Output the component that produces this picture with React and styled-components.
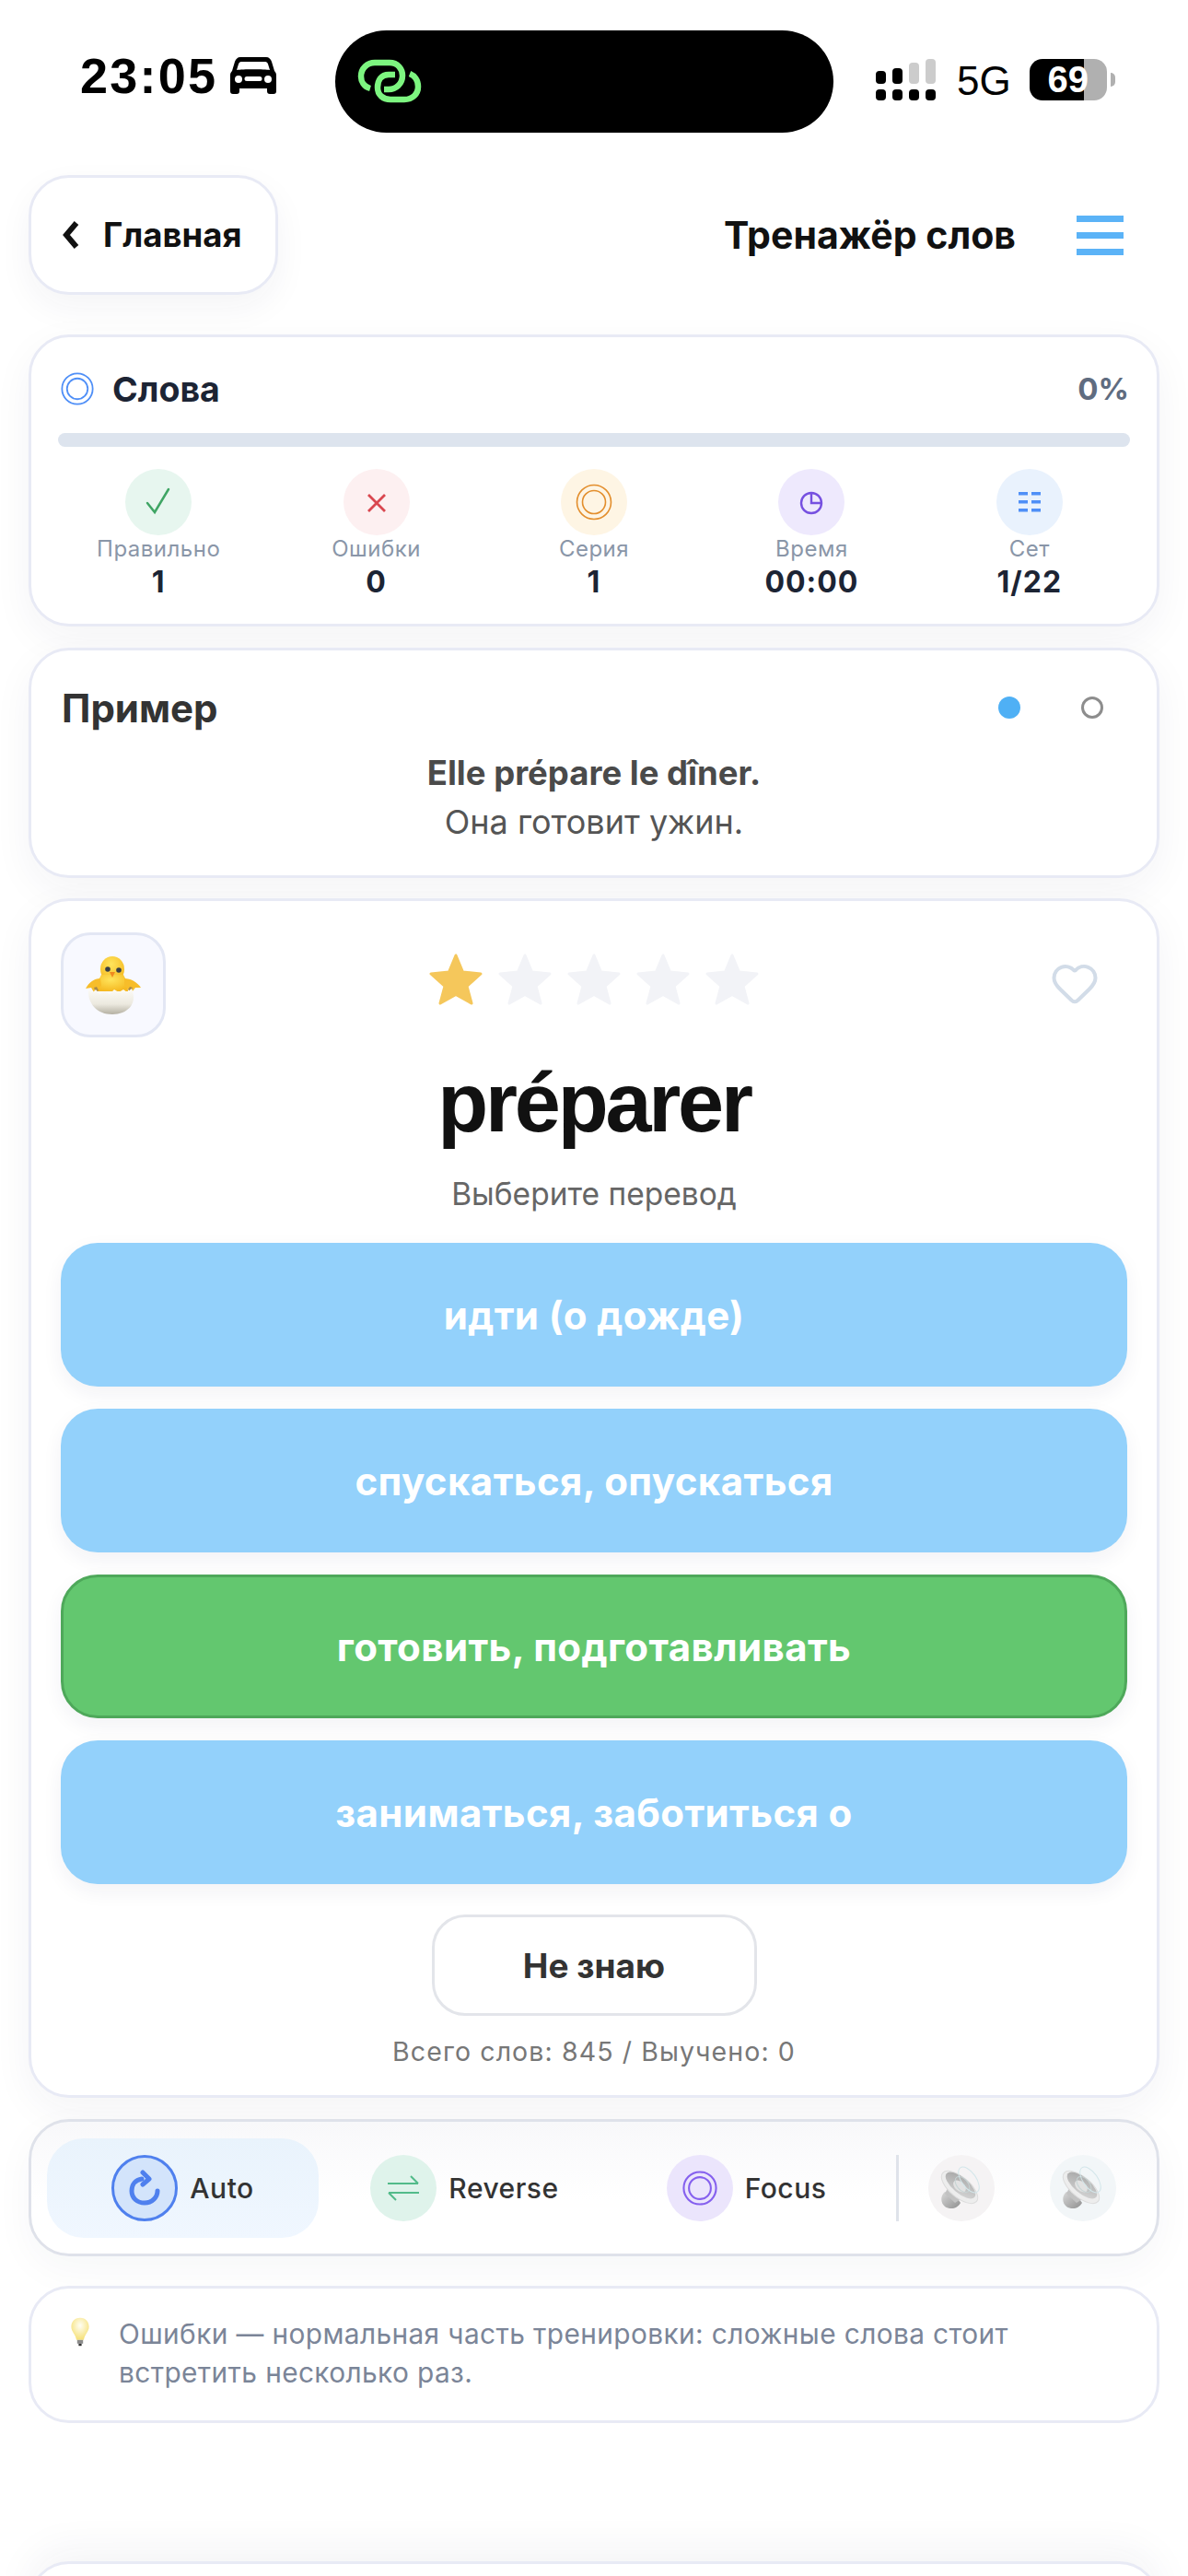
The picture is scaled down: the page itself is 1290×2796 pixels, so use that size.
import styled, { createGlobalStyle } from "styled-components";
import { Heart } from "lucide-react";

const GlobalStyle = createGlobalStyle`
  html, body { margin: 0; padding: 0; background: #fff; }
  * { box-sizing: border-box; }
  body { font-family: Inter, "Noto Sans", sans-serif; }
`;

const Page = styled.div`
  width: 1290px;
  height: 2796px;
  overflow: hidden;
  padding: 33px 31px 0;
  background: #fff;
`;

const StatusBar = styled.div`
  display: flex;
  height: 111px;
  margin-bottom: 46px;
`;
const StatusLeft = styled.div`
  width: 333px;
  padding-left: 56px;
  display: flex;
  align-items: center;
  gap: 14px;
  margin-top: -13px;
`;
const Time = styled.span`
  font: 700 54px "Liberation Sans", Arial, sans-serif;
  letter-spacing: 2.2px;
  color: #000;
  line-height: 1;
`;
const Island = styled.div`
  width: 541px;
  height: 111px;
  border-radius: 56px;
  background: #000;
  padding: 29px 0 0 24px;
`;
const StatusRight = styled.div`
  display: flex;
  align-items: flex-start;
  padding: 31px 0 0 46px;
`;
const NetLabel = styled.span`
  font: 400 44px "Liberation Sans", Arial, sans-serif;
  color: #000;
  margin: 2px 20px 0 22px;
  line-height: 1;
`;
const Battery = styled.div`
  position: relative;
  width: 84px;
  height: 45px;
  border-radius: 14px;
  background: linear-gradient(90deg, #000 70%, #b0b0b0 70%);
  color: #fff;
  font: 700 40px "Liberation Sans", Arial, sans-serif;
  display: flex;
  align-items: center;
  justify-content: center;
  &::after {
    content: "";
    position: absolute;
    right: -9px;
    top: 15px;
    width: 5px;
    height: 15px;
    border-radius: 0 5px 5px 0;
    background: #b0b0b0;
  }
`;

const Header = styled.header`
  display: flex;
  align-items: center;
  justify-content: space-between;
  height: 130px;
  margin-bottom: 43px;
`;
const BackButton = styled.button`
  width: 271px;
  height: 130px;
  border-radius: 44px;
  border: 3px solid #e8eaf5;
  background: #fff;
  box-shadow: 0 14px 36px rgba(30, 40, 80, 0.05);
  display: flex;
  align-items: center;
  padding: 0 0 0 34px;
  gap: 26px;
  font: 700 36.5px Inter, sans-serif;
  color: #111;
`;
const HeaderRight = styled.div`
  display: flex;
  align-items: center;
  padding-right: 39px;
  gap: 66px;
`;
const Title = styled.h1`
  margin: 0;
  font: 700 41px Inter, sans-serif;
  color: #111;
`;
const Burger = styled.div`
  width: 51px;
  display: flex;
  flex-direction: column;
  gap: 11px;
  & > i {
    display: block;
    height: 7px;
    background: #5bb3f7;
  }
`;

const Card = styled.section`
  border: 3px solid #e8eaf5;
  border-radius: 44px;
  background: #fff;
  box-shadow: 0 14px 44px rgba(30, 40, 80, 0.05);
`;

const ProgressCard = styled(Card)`
  height: 317px;
  padding: 34px 20px 0;
  margin-bottom: 23px;
`;
const ProgressHead = styled.div`
  display: flex;
  align-items: center;
  justify-content: space-between;
  height: 44px;
  padding: 0 10px 0 12px;
`;
const ProgressName = styled.div`
  display: flex;
  align-items: center;
  gap: 20px;
  font: 700 37.5px Inter, sans-serif;
  color: #1c2434;
`;
const Percent = styled.span`
  font: 700 33px Inter, sans-serif;
  color: #5f6c80;
`;
const Track = styled.div`
  height: 15px;
  margin: 26px 9px 24px;
  border-radius: 8px;
  background: #dde4ee;
`;
const Stats = styled.div`
  display: grid;
  grid-template-columns: repeat(5, 1fr);
`;
const Stat = styled.div`
  display: flex;
  flex-direction: column;
  align-items: center;
`;
const StatIcon = styled.div`
  width: 72px;
  height: 72px;
  border-radius: 50%;
  display: flex;
  align-items: center;
  justify-content: center;
  background: ${(p) => p.$bg};
`;
const StatLabel = styled.div`
  font: 400 24px/30px Inter, sans-serif;
  letter-spacing: 0.5px;
  color: #8a96a8;
`;
const StatValue = styled.div`
  margin-top: 2px;
  font: 700 32px/38px Inter, sans-serif;
  letter-spacing: 1px;
  color: #1c2434;
`;

const ExampleCard = styled(Card)`
  height: 250px;
  padding: 37px 33px 0;
  margin-bottom: 22px;
`;
const ExampleHead = styled.div`
  display: flex;
  align-items: center;
  justify-content: space-between;
  height: 50px;
`;
const ExampleTitle = styled.h2`
  margin: 0;
  font: 700 42px Inter, sans-serif;
  color: #333;
`;
const Dots = styled.div`
  display: flex;
  align-items: center;
  gap: 66px;
  padding-right: 25px;
`;
const Dot = styled.span`
  width: 24px;
  height: 24px;
  border-radius: 50%;
  background: ${(p) => (p.$active ? "#4fb0f5" : "transparent")};
  border: ${(p) => (p.$active ? "none" : "3px solid #8d8d8d")};
`;
const ExampleFr = styled.div`
  margin-top: 20px;
  text-align: center;
  font: 700 36.5px/52px Inter, sans-serif;
  color: #4a4a4a;
`;
const ExampleRu = styled.div`
  text-align: center;
  font: 400 36px/54px Inter, sans-serif;
  color: #555;
`;

const WordCard = styled(Card)`
  height: 1302px;
  padding: 34px 32px 0;
  margin-bottom: 23px;
`;
const WordTop = styled.div`
  display: flex;
  justify-content: space-between;
  height: 114px;
`;
const Avatar = styled.div`
  width: 114px;
  height: 114px;
  border-radius: 32px;
  border: 3px solid #e3e7f4;
  background: #f8f9ff;
  display: flex;
  align-items: center;
  justify-content: center;
`;
const Stars = styled.div`
  display: flex;
  gap: 15px;
  padding: 23px 30px 0 0;
  height: 80px;
`;
const HeartWrap = styled.div`
  padding: 28px 30px 0 0;
  color: #d2dce8;
`;
const Word = styled.div`
  margin-top: 11px;
  text-align: center;
  font: 700 90px/120px "Liberation Sans", Arial, sans-serif;
  letter-spacing: -3.2px;
  color: #111;
`;
const Hint = styled.div`
  margin-top: 17px;
  text-align: center;
  font: 400 33.5px/44px Inter, sans-serif;
  color: #666;
`;
const Options = styled.div`
  margin-top: 31px;
  display: flex;
  flex-direction: column;
  gap: 24px;
`;
const Option = styled.button`
  height: 156px;
  border-radius: 40px;
  border: ${(p) => (p.$correct ? "3px solid #4ea85a" : "none")};
  background: ${(p) => (p.$correct ? "#63c76f" : "#93d1fb")};
  color: #fff;
  font: 700 42px Inter, sans-serif;
  letter-spacing: 0.4px;
  box-shadow: 0 8px 22px rgba(30, 40, 80, 0.06);
`;
const SkipRow = styled.div`
  display: flex;
  justify-content: center;
  margin-top: 33px;
`;
const SkipButton = styled.button`
  width: 353px;
  height: 110px;
  border-radius: 36px;
  border: 3px solid #e3e5ea;
  background: #fff;
  font: 700 37px Inter, sans-serif;
  color: #333;
`;
const Total = styled.div`
  margin-top: 19px;
  text-align: center;
  font: 400 28.5px/40px Inter, sans-serif;
  letter-spacing: 1.1px;
  color: #777;
`;

const Toolbar = styled.section`
  height: 149px;
  margin-bottom: 32px;
  border: 3px solid #dfe2ea;
  border-radius: 44px;
  background: linear-gradient(180deg, #f8f8fa 0%, #fff 60%);
  display: flex;
  align-items: center;
  padding: 0 0 0 17px;
  box-shadow: 0 14px 44px rgba(30, 40, 80, 0.04);
`;
const Tab = styled.div`
  width: 295px;
  height: 108px;
  margin-right: 11px;
  border-radius: 40px;
  display: flex;
  align-items: center;
  justify-content: center;
  gap: 13px;
  background: ${(p) => (p.$active ? "linear-gradient(180deg, #e9f3fc, #f0f7ff)" : "transparent")};
  font: 500 30px Inter, sans-serif;
  letter-spacing: 0.5px;
  color: #333;
`;
const ToolIcon = styled.div`
  width: 72px;
  height: 72px;
  border-radius: 50%;
  display: flex;
  align-items: center;
  justify-content: center;
  background: ${(p) => p.$bg};
  border: ${(p) => (p.$ring ? `3px solid ${p.$ring}` : "none")};
`;
const Divider = styled.div`
  width: 3px;
  height: 72px;
  margin: 0 32px 0 4px;
  background: #dfe3ea;
`;
const SoundGroup = styled.div`
  display: flex;
  gap: 60px;
`;

const TipCard = styled(Card)`
  height: 149px;
  padding: 28px 40px 0 41px;
  margin-bottom: 150px;
  display: flex;
  gap: 30px;
  box-shadow: none;
`;
const TipText = styled.p`
  margin: 0;
  font: 400 29.8px/42px Inter, sans-serif;
  letter-spacing: 0.4px;
  color: #7b8598;
`;
const BottomCard = styled(Card)`
  height: 100px;
  box-shadow: 0 -14px 44px rgba(30, 40, 80, 0.05);
`;

const Rings = ({ size, color, outer = 1.6, inner = 1.6 }) => (
  <svg width={size} height={size} viewBox="0 0 40 40" fill="none" stroke={color}>
    <circle cx="20" cy="20" r="18.5" strokeWidth={outer} />
    <circle cx="20" cy="20" r="12.5" strokeWidth={inner} />
  </svg>
);

const CarIcon = () => (
  <svg width="50" height="40" viewBox="0 0 50 40">
    <path
      fill="#000"
      fillRule="evenodd"
      d="M11 0h28c3 0 5 2 6 5l3 10c1.500 1.500 2 3 2 5v17c0 2-1 3-3 3h-4c-2 0-3-1-3-3v-3H10v3c0 2-1 3-3 3H3c-2 0-3-1-3-3V20c0-2 .5-3.500 2-5L5 5c1-3 3-5 6-5zm1 5c-1.500 0-2.500 1-3 2.500L7 14c6-1 30-1 36 0l-2-6.500C40.500 6 39.500 5 38 5H12zM9 20a4 4 0 1 0 0 8 4 4 0 0 0 0-8zm32 0a4 4 0 1 0 0 8 4 4 0 0 0 0-8zM18 21a2 2 0 0 0 0 5h14a2 2 0 0 0 0-5H18z"
    />
  </svg>
);

const LinkIcon = () => (
  <svg width="70" height="52" viewBox="18 12 70 52" fill="none" stroke="#7df580" strokeWidth="6.500">
    <path d="M32 46C25 44 22 38 22 33C22 24 29 18 37 18H53C62 18 67 25 67 32C67 41 60 47 52 47H47" />
    <path d="M59 31H52C44 31 40 37 40 45C40 53 46 58 54 58H69C78 58 84 52 84 44C84 37 80 32 75 30" />
  </svg>
);

const SignalIcon = () => (
  <svg width="66" height="46" viewBox="0 0 66 46">
    {[0, 18, 36, 54].map((x) => (
      <rect key={x} x={x} y="33" width="11" height="12" rx="4" fill="#000" />
    ))}
    <rect x="0" y="13" width="11" height="14" rx="4" fill="#000" />
    <rect x="18" y="10" width="11" height="17" rx="4" fill="#000" />
    <rect x="36" y="4" width="11" height="23" rx="4" fill="#ccc" />
    <rect x="54" y="0" width="11" height="27" rx="4" fill="#ccc" />
  </svg>
);

const Star = ({ color }) => (
  <svg width="60" height="56" viewBox="0 0 60 56">
    <path
      fill={color}
      stroke={color}
      strokeWidth="3"
      strokeLinejoin="round"
      d="M30 2L37.500 20L57 22L42 35.500L47 54L30 44.500L13 54L18 35.500L3 22L22.500 20Z"
    />
  </svg>
);

const Chick = () => (
  <svg width="64" height="66" viewBox="50 34 64 66">
    <defs>
      <radialGradient id="chickBody" cx="45%" cy="30%" r="70%">
        <stop offset="0%" stopColor="#ffe45c" />
        <stop offset="100%" stopColor="#f5b921" />
      </radialGradient>
      <linearGradient id="eggShell" x1="0" y1="0" x2="0" y2="1">
        <stop offset="0%" stopColor="#fdfcf8" />
        <stop offset="60%" stopColor="#ece9df" />
        <stop offset="100%" stopColor="#b4b0a2" />
      </linearGradient>
    </defs>
    <ellipse cx="81" cy="50" rx="13" ry="14" fill="url(#chickBody)" />
    <path d="M69 56c-3 5-5 11-5 18h34c0-7-2-13-5-18z" fill="url(#chickBody)" />
    <path d="M68 60C61 60 56 64 52 71l6-1 3 5 8-7z" fill="#f7bd2a" />
    <path d="M94 60c7 0 14 4 18 10l-6 0-4 5-8-7z" fill="#f7bd2a" />
    <path d="M61 70l2 5 3-2-2-4zM103 70l-2 5-3-3 2-3z" fill="#a8894a" />
    <path d="M55 72l5 3 3-3 4 5 6-3 5 3 5-5 5 3 5-3 4 3 5-4C109 88 97 99 81 99C65 99 54 88 55 72Z" fill="url(#eggShell)" />
    <circle cx="76" cy="50" r="2.800" fill="#3a3f45" />
    <circle cx="88" cy="51" r="2.800" fill="#3a3f45" />
    <path d="M78 53h6l-3 6z" fill="#ef8a20" />
  </svg>
);

const Speaker = () => (
  <svg width="72" height="72" viewBox="8 8 72 72">
    <defs>
      <linearGradient id="magnet" x1="0" y1="0" x2="1" y2="1">
        <stop offset="0%" stopColor="#d8d8d8" />
        <stop offset="100%" stopColor="#8f8f8f" />
      </linearGradient>
      <linearGradient id="coneIn" x1="0" y1="0" x2="1" y2="1">
        <stop offset="0%" stopColor="#a4a4a4" />
        <stop offset="100%" stopColor="#d8d8d8" />
      </linearGradient>
    </defs>
    <path d="M26 48C21 52 21 60 26 64C32 68 40 66 43 60L36 50Z" fill="url(#magnet)" />
    <path d="M30 42L26 50L37 60L46 54Z" fill="#c2c2c2" />
    <ellipse cx="42" cy="43" rx="24" ry="11" transform="rotate(40 42 43)" fill="#ededed" stroke="#dcdcdc" />
    <ellipse cx="43" cy="41" rx="20" ry="8.500" transform="rotate(40 43 41)" fill="url(#coneIn)" />
    <ellipse cx="42" cy="42" rx="8" ry="5" transform="rotate(40 42 42)" fill="#e2e2e2" />
    <ellipse cx="45" cy="40" rx="10" ry="6" transform="rotate(50 45 40)" fill="none" stroke="#c6d4d4" />
    <ellipse cx="52" cy="35" rx="16" ry="8" transform="rotate(55 52 35)" fill="none" stroke="#d3e6ea" />
  </svg>
);

const Bulb = () => (
  <svg width="30" height="38" viewBox="0 0 30 38">
    <defs>
      <radialGradient id="glass" cx="50%" cy="35%" r="60%">
        <stop offset="0%" stopColor="#fffef4" />
        <stop offset="100%" stopColor="#f6e27e" />
      </radialGradient>
    </defs>
    <path d="M15 0C7 0 3 6 3 12c0 7 6 10 7 18h10c1-8 7-11 7-18C27 6 23 0 15 0z" fill="url(#glass)" />
    <rect x="11" y="30" width="8" height="5" fill="#8b8b8b" />
    <rect x="13" y="35" width="4" height="3" fill="#333" />
  </svg>
);

const stats = [
  {
    label: "Правильно",
    value: "1",
    bg: "#e7f6ef",
    icon: (
      <svg width="32" height="32" viewBox="0 0 32 32" fill="none" stroke="#3fa564" strokeWidth="2.500" strokeLinecap="round">
        <path d="M4 17l8 10L27 2" />
      </svg>
    ),
  },
  {
    label: "Ошибки",
    value: "0",
    bg: "#fdf0f1",
    icon: (
      <svg width="22" height="24" viewBox="0 0 22 24" fill="none" stroke="#d9474f" strokeWidth="2.800">
        <path d="M2 4l18 18M20 4L2 22" />
      </svg>
    ),
  },
  { label: "Серия", value: "1", bg: "#fef5e4", icon: <Rings size={40} color="#e38e2c" /> },
  {
    label: "Время",
    value: "00:00",
    bg: "#eee9fd",
    icon: (
      <svg width="26" height="28" viewBox="0 0 26 28" fill="none" stroke="#7650e0" strokeWidth="2.400">
        <circle cx="13" cy="15" r="11" />
        <path d="M13 4v11h11" />
      </svg>
    ),
  },
  {
    label: "Сет",
    value: "1/22",
    bg: "#e9f2fd",
    icon: (
      <svg width="26" height="26" viewBox="0 0 26 26" fill="#4f8ff7">
        <rect x="1" y="2" width="10" height="3.500" />
        <rect x="15" y="2" width="10" height="3.500" />
        <rect x="1" y="11" width="10" height="3.500" />
        <rect x="15" y="11" width="10" height="3.500" />
        <rect x="1" y="20" width="10" height="3.500" />
        <rect x="15" y="20" width="10" height="3.500" />
      </svg>
    ),
  },
];

const options = [
  { text: "идти (о дожде)" },
  { text: "спускаться, опускаться" },
  { text: "готовить, подготавливать", correct: true },
  { text: "заниматься, заботиться о" },
];

function App() {
  return (
    <Page>
      <GlobalStyle />
      <StatusBar>
        <StatusLeft>
          <Time>23:05</Time>
          <CarIcon />
        </StatusLeft>
        <Island>
          <LinkIcon />
        </Island>
        <StatusRight>
          <SignalIcon />
          <NetLabel>5G</NetLabel>
          <Battery>69</Battery>
        </StatusRight>
      </StatusBar>

      <Header>
        <BackButton>
          <svg width="18" height="32" viewBox="0 0 18 32" fill="none" stroke="#111" strokeWidth="6">
            <path d="M15 3L4 16l11 13" />
          </svg>
          Главная
        </BackButton>
        <HeaderRight>
          <Title>Тренажёр слов</Title>
          <Burger>
            <i />
            <i />
            <i />
          </Burger>
        </HeaderRight>
      </Header>

      <ProgressCard>
        <ProgressHead>
          <ProgressName>
            <Rings size={36} color="#4f8ff7" outer={2} inner={2} />
            Слова
          </ProgressName>
          <Percent>0%</Percent>
        </ProgressHead>
        <Track />
        <Stats>
          {stats.map((s) => (
            <Stat key={s.label}>
              <StatIcon $bg={s.bg}>{s.icon}</StatIcon>
              <StatLabel>{s.label}</StatLabel>
              <StatValue>{s.value}</StatValue>
            </Stat>
          ))}
        </Stats>
      </ProgressCard>

      <ExampleCard>
        <ExampleHead>
          <ExampleTitle>Пример</ExampleTitle>
          <Dots>
            <Dot $active />
            <Dot />
          </Dots>
        </ExampleHead>
        <ExampleFr>Elle prépare le dîner.</ExampleFr>
        <ExampleRu>Она готовит ужин.</ExampleRu>
      </ExampleCard>

      <WordCard>
        <WordTop>
          <Avatar>
            <Chick />
          </Avatar>
          <Stars>
            <Star color="#f5c75b" />
            <Star color="#f2f3f7" />
            <Star color="#f2f3f7" />
            <Star color="#f2f3f7" />
            <Star color="#f2f3f7" />
          </Stars>
          <HeartWrap>
            <Heart size={54} strokeWidth={1.8} />
          </HeartWrap>
        </WordTop>
        <Word>préparer</Word>
        <Hint>Выберите перевод</Hint>
        <Options>
          {options.map((o) => (
            <Option key={o.text} $correct={o.correct}>
              {o.text}
            </Option>
          ))}
        </Options>
        <SkipRow>
          <SkipButton>Не знаю</SkipButton>
        </SkipRow>
        <Total>Всего слов: 845 / Выучено: 0</Total>
      </WordCard>

      <Toolbar>
        <Tab $active>
          <ToolIcon $bg="#d3e4fb" $ring="#4f80ee">
            <svg width="34" height="40" viewBox="0 0 34 40" fill="none" stroke="#4f80ee" strokeWidth="5" strokeLinecap="round" strokeLinejoin="round">
              <path d="M14 10C7 11 3 16 3 23c0 8 6 13 14 13s14-6 14-13" />
              <path d="M15 3l7 7-7 6" />
            </svg>
          </ToolIcon>
          Auto
        </Tab>
        <Tab>
          <ToolIcon $bg="#dff3eb">
            <svg width="36" height="28" viewBox="0 0 36 28" fill="none" stroke="#52bb8a" strokeWidth="2">
              <path d="M1 9h33M26 1l8 8M35 19H2M10 27l-8-8" />
            </svg>
          </ToolIcon>
          Reverse
        </Tab>
        <Tab>
          <ToolIcon $bg="#ebe5fc">
            <Rings size={38} color="#8560ee" outer={2.200} inner={2.200} />
          </ToolIcon>
          Focus
        </Tab>
        <Divider />
        <SoundGroup>
          <ToolIcon $bg="#f5f3f4">
            <Speaker />
          </ToolIcon>
          <ToolIcon $bg="#f2f6f8">
            <Speaker />
          </ToolIcon>
        </SoundGroup>
      </Toolbar>

      <TipCard>
        <Bulb />
        <TipText>
          Ошибки — нормальная часть тренировки: сложные слова стоит встретить несколько раз.
        </TipText>
      </TipCard>

      <BottomCard />
    </Page>
  );
}

export default App;
